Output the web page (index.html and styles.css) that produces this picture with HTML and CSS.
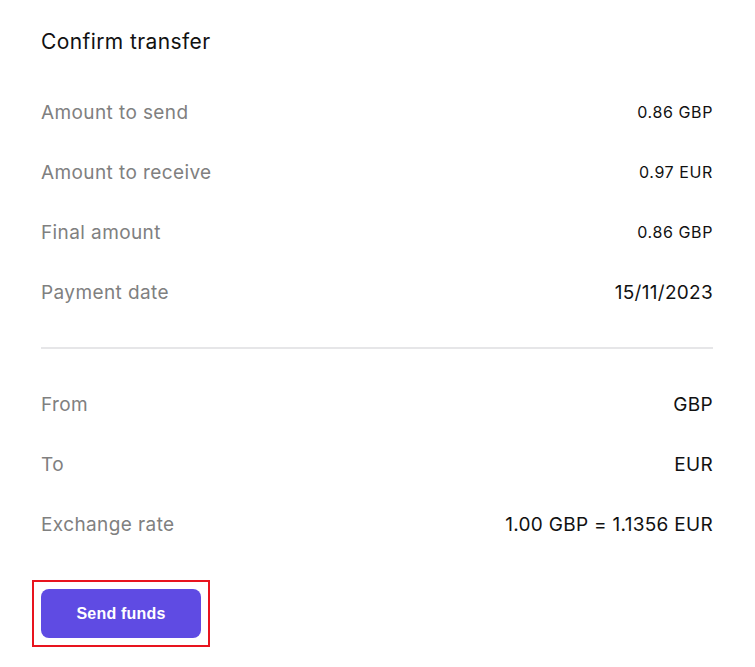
FILE: index.html
```html
<!DOCTYPE html>
<html lang="en">
<head>
    <meta charset="UTF-8">
    <meta name="viewport" content="width=device-width, initial-scale=1.0">
    <title>Confirm transfer</title>
    <link rel="stylesheet" href="styles.css">
</head>
<body>
    <div class="panel">
        <h1 class="title">Confirm transfer</h1>

        <div class="rows">
            <div class="row">
                <span class="label">Amount to send</span>
                <span class="value small">0.86 GBP</span>
            </div>
            <div class="row">
                <span class="label">Amount to receive</span>
                <span class="value small">0.97 EUR</span>
            </div>
            <div class="row">
                <span class="label">Final amount</span>
                <span class="value small">0.86 GBP</span>
            </div>
            <div class="row">
                <span class="label">Payment date</span>
                <span class="value">15/11/2023</span>
            </div>
        </div>

        <hr class="divider">

        <div class="rows">
            <div class="row">
                <span class="label">From</span>
                <span class="value">GBP</span>
            </div>
            <div class="row">
                <span class="label">To</span>
                <span class="value">EUR</span>
            </div>
            <div class="row">
                <span class="label">Exchange rate</span>
                <span class="value">1.00 GBP = 1.1356 EUR</span>
            </div>
        </div>

        <div class="highlight">
            <button class="send-btn">Send funds</button>
        </div>
    </div>
</body>
</html>
```

FILE: styles.css
```css
body {
    margin: 0;
    background: #ffffff;
    font-family: Inter, "Noto Sans", sans-serif;
    color: #111111;
}
.panel {
    padding: 30px 42px 0 41px;
}
.title {
    margin: 0 0 28px;
    font-size: 21px;
    font-weight: 400;
    line-height: 24px;
    letter-spacing: 0.4px;
    color: #111111;
}
.row {
    display: flex;
    justify-content: space-between;
    align-items: center;
    height: 60px;
}
.label {
    font-size: 19px;
    letter-spacing: 0.4px;
    color: #808080;
}
.value {
    font-size: 19px;
    letter-spacing: 0.3px;
    color: #111111;
}
.value.small {
    font-size: 16px;
    letter-spacing: 0.6px;
}
.divider {
    margin: 25px 0;
    border: none;
    height: 2px;
    background: #e6e6e8;
}
.highlight {
    display: inline-block;
    margin: 26px 0 0 -9px;
    padding: 7px;
    border: 2px solid #e8141e;
}
.send-btn {
    display: block;
    width: 160px;
    height: 49px;
    border: none;
    border-radius: 8px;
    background-color: #5f4be3;
    color: #ffffff;
    font-family: "Liberation Sans", Arial, sans-serif;
    font-size: 16px;
    font-weight: bold;
    letter-spacing: 0.2px;
    cursor: pointer;
}
```
